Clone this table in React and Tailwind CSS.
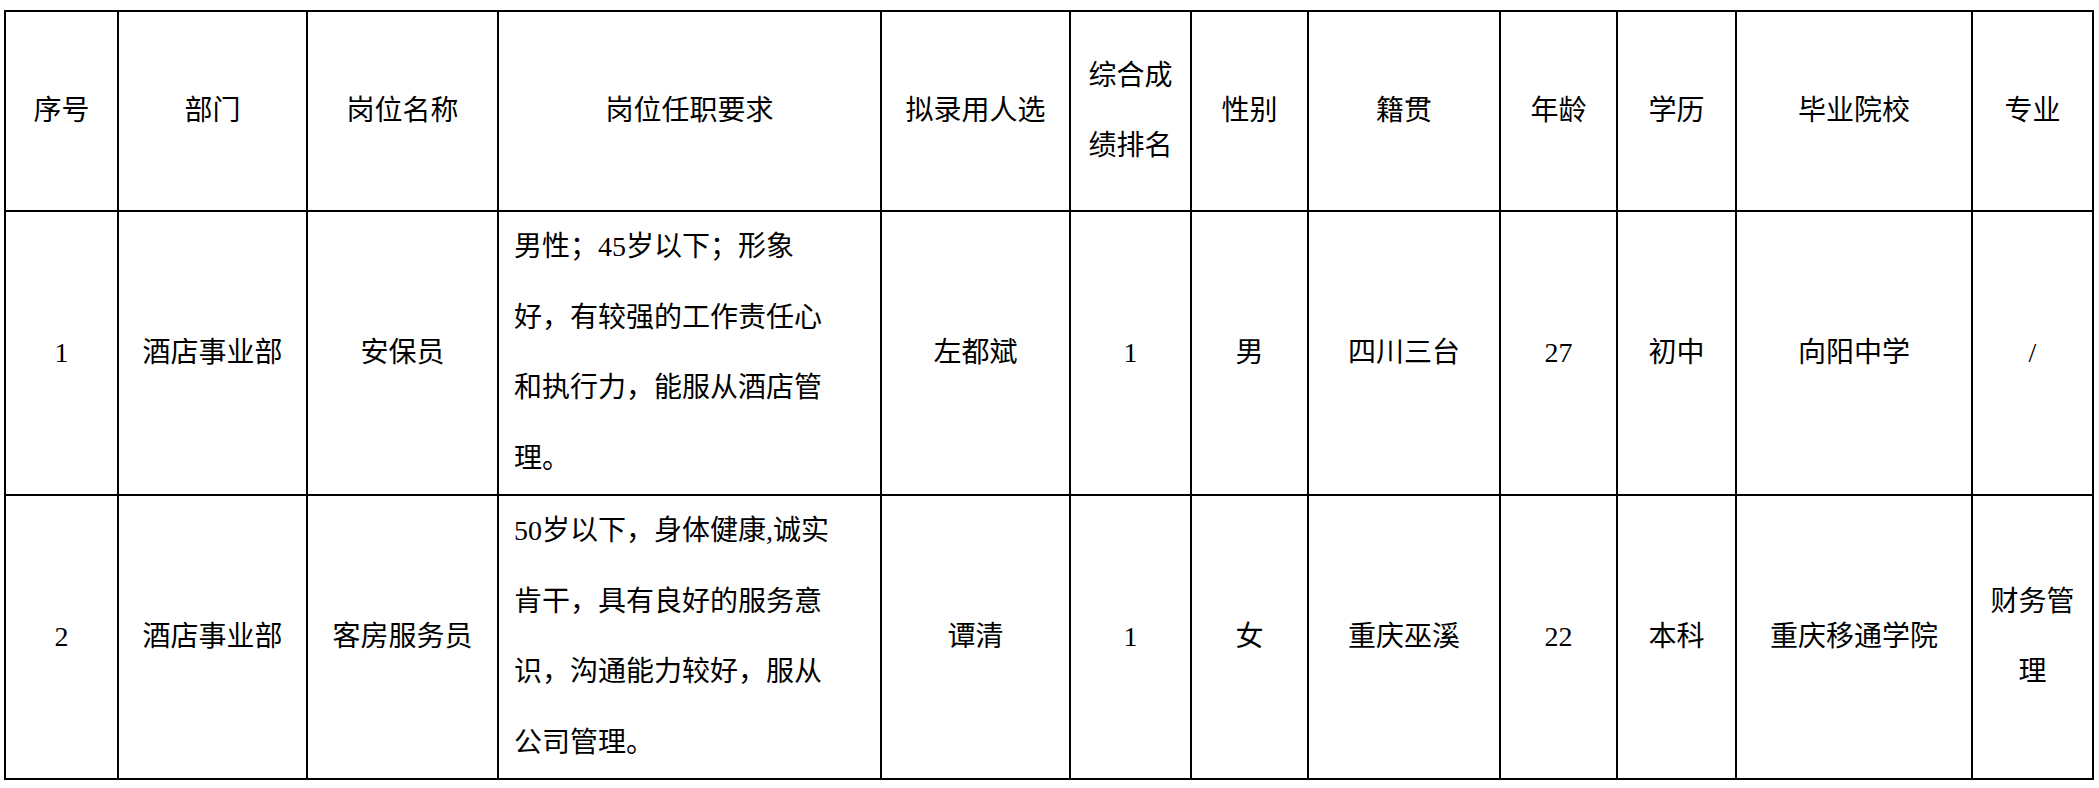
import React from 'react';

const font = { fontFamily: '"Liberation Serif", "Noto Sans CJK SC", serif' };

const headers = [
  '序号',
  '部门',
  '岗位名称',
  '岗位任职要求',
  '拟录用人选',
  ['综合成', '绩排名'],
  '性别',
  '籍贯',
  '年龄',
  '学历',
  '毕业院校',
  '专业',
];

const rows = [
  {
    no: '1',
    dept: '酒店事业部',
    post: '安保员',
    req: ['男性；45岁以下；形象', '好，有较强的工作责任心', '和执行力，能服从酒店管', '理。'],
    name: '左都斌',
    rank: '1',
    sex: '男',
    origin: '四川三台',
    age: '27',
    edu: '初中',
    school: '向阳中学',
    major: ['/'],
  },
  {
    no: '2',
    dept: '酒店事业部',
    post: '客房服务员',
    req: ['50岁以下，身体健康,诚实', '肯干，具有良好的服务意', '识，沟通能力较好，服从', '公司管理。'],
    name: '谭清',
    rank: '1',
    sex: '女',
    origin: '重庆巫溪',
    age: '22',
    edu: '本科',
    school: '重庆移通学院',
    major: ['财务管', '理'],
  },
];

const cell = 'border-2 border-black text-center align-middle p-0 leading-[70.5px] whitespace-nowrap';

const Lines = ({ items }) => (
  <>
    {items.map((t, i) => (
      <div key={i}>{t}</div>
    ))}
  </>
);

export default function App() {
  return (
    <div className="min-h-screen bg-white text-black pt-[10px] pl-[4px]" style={font}>
      <table className="table-fixed border-collapse w-[2090px] text-[28px]">
        <colgroup>
          <col className="w-[113px]" />
          <col className="w-[189px]" />
          <col className="w-[191px]" />
          <col className="w-[383px]" />
          <col className="w-[189px]" />
          <col className="w-[121px]" />
          <col className="w-[117px]" />
          <col className="w-[192px]" />
          <col className="w-[117px]" />
          <col className="w-[119px]" />
          <col className="w-[236px]" />
          <col className="w-[121px]" />
        </colgroup>
        <thead>
          <tr className="h-[200px]">
            {headers.map((h, i) => (
              <th key={i} className={`${cell} font-normal leading-[70px]`}>
                {Array.isArray(h) ? <Lines items={h} /> : h}
              </th>
            ))}
          </tr>
        </thead>
        <tbody>
          {rows.map((r) => (
            <tr key={r.no}>
              <td className={cell}>{r.no}</td>
              <td className={cell}>{r.dept}</td>
              <td className={cell}>{r.post}</td>
              <td className={`${cell} text-left pl-[15px]`}>
                <Lines items={r.req} />
              </td>
              <td className={cell}>{r.name}</td>
              <td className={cell}>{r.rank}</td>
              <td className={cell}>{r.sex}</td>
              <td className={cell}>{r.origin}</td>
              <td className={cell}>{r.age}</td>
              <td className={cell}>{r.edu}</td>
              <td className={cell}>{r.school}</td>
              <td className={cell}>
                <Lines items={r.major} />
              </td>
            </tr>
          ))}
        </tbody>
      </table>
    </div>
  );
}
